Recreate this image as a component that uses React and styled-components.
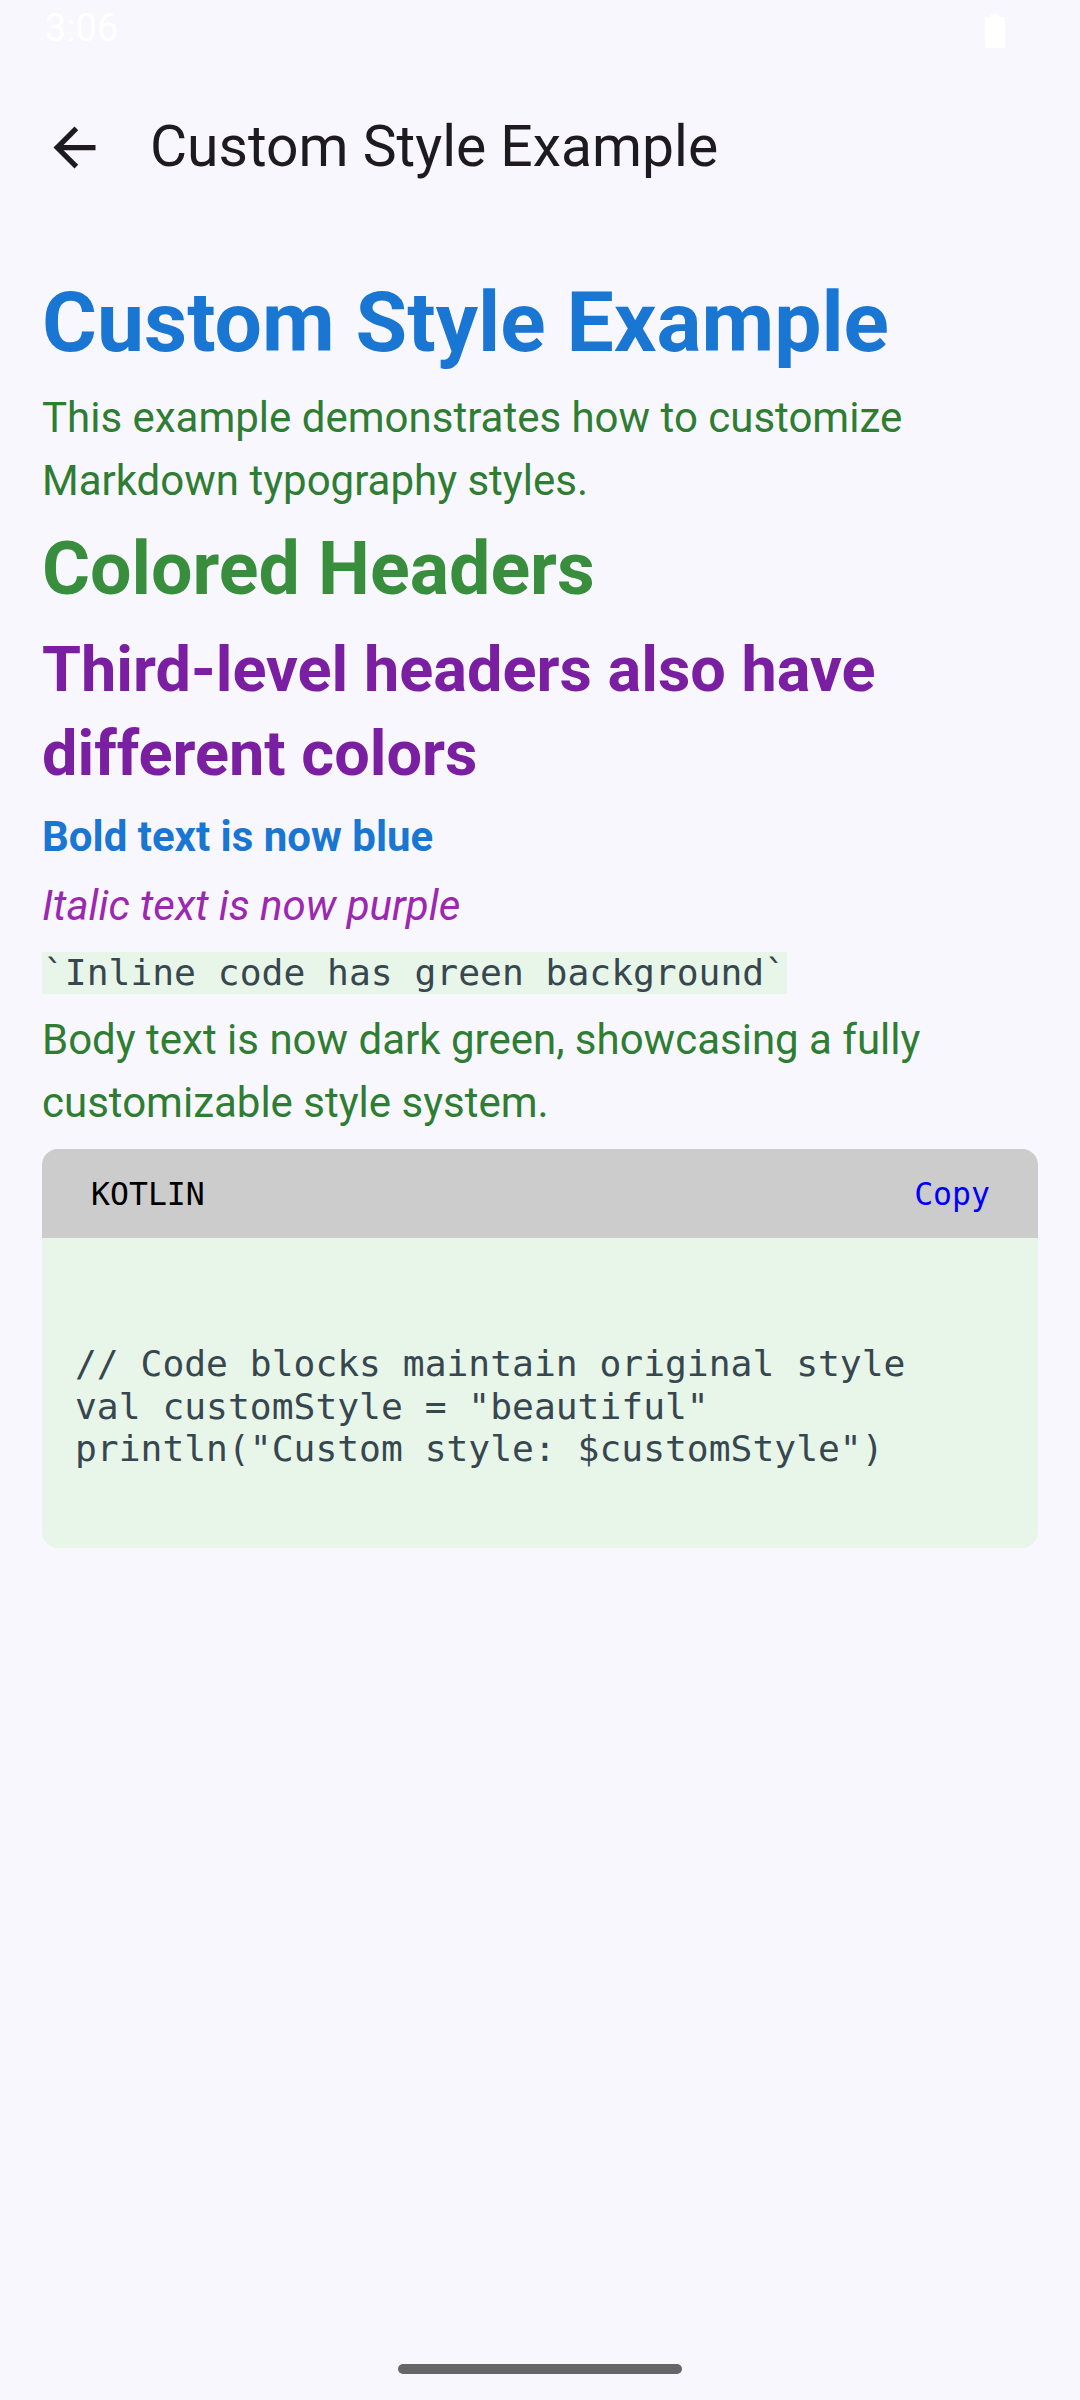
import React from "react";
import styled, { createGlobalStyle } from "styled-components";

const GlobalStyle = createGlobalStyle`
  html, body {
    margin: 0;
    padding: 0;
    background: #f8f7fe;
  }
  body {
    font-family: Roboto, "Noto Sans", sans-serif;
  }
  * { box-sizing: border-box; }
`;

const Page = styled.div`
  width: 1080px;
  min-height: 2400px;
  display: flex;
  flex-direction: column;
  background: #f8f7fe;
`;

const StatusBar = styled.div`
  height: 63px;
  display: flex;
  align-items: flex-start;
  justify-content: space-between;
  padding: 0 75px 0 45px;
`;

const Clock = styled.span`
  font-family: Roboto, sans-serif;
  font-size: 38px;
  line-height: 38px;
  margin-top: 9px;
  color: #ffffff;
`;

const Battery = styled.div`
  margin-top: 14px;
  width: 20px;
  display: flex;
  flex-direction: column;
  align-items: center;
`;

const BatteryNub = styled.div`
  width: 8px;
  height: 3px;
  background: #ffffff;
  border-radius: 1px 1px 0 0;
`;

const BatteryBody = styled.div`
  width: 20px;
  height: 31px;
  background: #ffffff;
  border-radius: 2px;
`;

const TopBar = styled.div`
  height: 168px;
  display: flex;
  align-items: center;
  padding-left: 43px;
  gap: 44px;
`;

const NavButton = styled.button`
  width: 63px;
  height: 63px;
  padding: 0;
  border: none;
  background: transparent;
  display: flex;
  align-items: center;
  justify-content: center;
  color: #1d1b20;
`;

const Title = styled.h1`
  margin: 0;
  font-family: Roboto, sans-serif;
  font-weight: 400;
  font-size: 57px;
  line-height: 70px;
  color: #1d1b20;
`;

const Content = styled.div`
  padding: 40px 42px 0 42px;
  display: flex;
  flex-direction: column;
`;

const Heading = styled.div`
  font-family: Roboto, sans-serif;
  font-weight: 700;
  font-size: ${(p) => p.$size}px;
  line-height: ${(p) => p.$lh}px;
  color: ${(p) => p.$color};
  margin-top: ${(p) => p.$mt}px;
`;

const Text = styled.p`
  margin: ${(p) => p.$mt}px 0 0 0;
  font-family: Roboto, sans-serif;
  font-size: 42px;
  line-height: 63px;
  color: ${(p) => p.$color};
  font-weight: ${(p) => (p.$bold ? 700 : 400)};
  font-style: ${(p) => (p.$italic ? "italic" : "normal")};
`;

const CodeRow = styled.div`
  margin-top: ${(p) => p.$mt}px;
  line-height: 0;
`;

const InlineCode = styled.span`
  display: inline-block;
  font-family: "DejaVu Sans Mono", "Liberation Mono", monospace;
  font-size: 36.3px;
  line-height: 42px;
  height: 42px;
  padding: 0 1px;
  background: #e8f5e9;
  color: #37474f;
  white-space: pre;
`;

const CodeBlock = styled.div`
  margin-top: 15px;
  border-radius: 16px;
  overflow: hidden;
  background: #e8f5e9;
`;

const CodeHeader = styled.div`
  height: 89px;
  background: #cccccc;
  display: flex;
  align-items: center;
  justify-content: space-between;
  padding: 0 48px 0 49px;
  font-family: "DejaVu Sans Mono", "Liberation Mono", monospace;
  font-size: 31.5px;
`;

const Lang = styled.span`
  color: #000000;
`;

const CopyButton = styled.span`
  color: #0000ff;
`;

const CodeBody = styled.pre`
  margin: 0;
  padding: 105px 32px 77px 33px;
  font-family: "DejaVu Sans Mono", "Liberation Mono", monospace;
  font-size: 36.3px;
  line-height: 42.5px;
  color: #37474f;
`;

const Spacer = styled.div`
  flex: 1;
`;

const GestureArea = styled.div`
  height: 36px;
  display: flex;
  justify-content: center;
  align-items: flex-start;
`;

const GestureBar = styled.div`
  width: 284px;
  height: 10px;
  border-radius: 5px;
  background: #666668;
`;

const BackArrow = () => (
  <svg width="63" height="63" viewBox="0 0 24 24" fill="currentColor">
    <path d="M20 11H7.83l5.59-5.59L12 4l-8 8 8 8 1.41-1.41L7.83 13H20v-2z" />
  </svg>
);

const code = `// Code blocks maintain original style
val customStyle = "beautiful"
println("Custom style: $customStyle")`;

export default function App() {
  return (
    <>
      <GlobalStyle />
      <Page>
        <StatusBar>
          <Clock>3:06</Clock>
          <Battery>
            <BatteryNub />
            <BatteryBody />
          </Battery>
        </StatusBar>
        <TopBar>
          <NavButton aria-label="Back">
            <BackArrow />
          </NavButton>
          <Title>Custom Style Example</Title>
        </TopBar>
        <Content>
          <Heading $size={84} $lh={103} $color="#1976d2" $mt={0}>
            Custom Style Example
          </Heading>
          <Text $mt={12} $color="#2e7d32">
            This example demonstrates how to customize Markdown typography styles.
          </Text>
          <Heading $size={73.5} $lh={90} $color="#388e3c" $mt={12}>
            Colored Headers
          </Heading>
          <Heading $size={63} $lh={84} $color="#7b1fa2" $mt={14}>
            Third-level headers also have different colors
          </Heading>
          <Text $mt={9} $bold $color="#1976d2">
            Bold text is now blue
          </Text>
          <Text $mt={6} $italic $color="#9c27b0">
            Italic text is now purple
          </Text>
          <CodeRow $mt={15}>
            <InlineCode>`Inline code has green background`</InlineCode>
          </CodeRow>
          <Text $mt={14} $color="#2e7d32">
            Body text is now dark green, showcasing a fully customizable style system.
          </Text>
          <CodeBlock>
            <CodeHeader>
              <Lang>KOTLIN</Lang>
              <CopyButton>Copy</CopyButton>
            </CodeHeader>
            <CodeBody>{code}</CodeBody>
          </CodeBlock>
        </Content>
        <Spacer />
        <GestureArea>
          <GestureBar />
        </GestureArea>
      </Page>
    </>
  );
}
